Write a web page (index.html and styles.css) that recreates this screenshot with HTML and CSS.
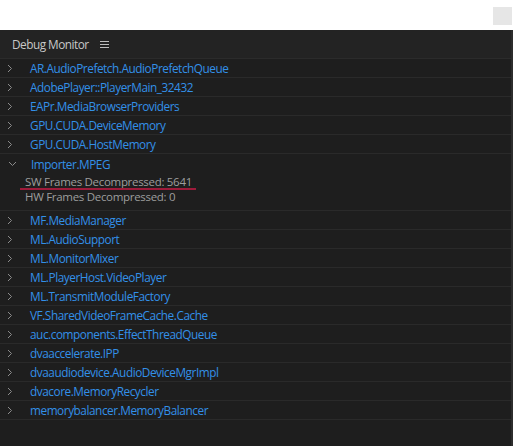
FILE: index.html
```html
<!DOCTYPE html>
<html>
<head>
<meta charset="utf-8">
<link rel="stylesheet" href="styles.css">
</head>
<body>
<div class="topbar"><div class="winbtn"></div></div>
<div class="panel">
  <div class="header">
    <span class="title">Debug Monitor</span>
    <svg class="menu" width="9" height="8" viewBox="0 0 9 8"><path d="M0 1.5H9M0 4.5H9M0 7.5H9" stroke="#bdbdbd" stroke-width="1"/></svg>
  </div>
  <div class="list">
    <div class="row"><svg class="chev" width="6" height="9" viewBox="0 0 6 9"><path d="M1 1L4.5 4.5L1 8" fill="none" stroke="#8c8c8c" stroke-width="1"/></svg><span class="name">AR.AudioPrefetch.AudioPrefetchQueue</span></div>
    <div class="row"><svg class="chev" width="6" height="9" viewBox="0 0 6 9"><path d="M1 1L4.5 4.5L1 8" fill="none" stroke="#8c8c8c" stroke-width="1"/></svg><span class="name">AdobePlayer::PlayerMain_32432</span></div>
    <div class="row"><svg class="chev" width="6" height="9" viewBox="0 0 6 9"><path d="M1 1L4.5 4.5L1 8" fill="none" stroke="#8c8c8c" stroke-width="1"/></svg><span class="name">EAPr.MediaBrowserProviders</span></div>
    <div class="row"><svg class="chev" width="6" height="9" viewBox="0 0 6 9"><path d="M1 1L4.5 4.5L1 8" fill="none" stroke="#8c8c8c" stroke-width="1"/></svg><span class="name">GPU.CUDA.DeviceMemory</span></div>
    <div class="row"><svg class="chev" width="6" height="9" viewBox="0 0 6 9"><path d="M1 1L4.5 4.5L1 8" fill="none" stroke="#8c8c8c" stroke-width="1"/></svg><span class="name">GPU.CUDA.HostMemory</span></div>
    <div class="group">
      <div class="row open"><svg class="chev down" width="9" height="6" viewBox="0 0 9 6"><path d="M1 1L4.5 4.5L8 1" fill="none" stroke="#8c8c8c" stroke-width="1"/></svg><span class="name">Importer.MPEG</span></div>
      <div class="child marked">SW Frames Decompressed: 5641</div>
      <div class="child">HW Frames Decompressed: 0</div>
    </div>
    <div class="row"><svg class="chev" width="6" height="9" viewBox="0 0 6 9"><path d="M1 1L4.5 4.5L1 8" fill="none" stroke="#8c8c8c" stroke-width="1"/></svg><span class="name">MF.MediaManager</span></div>
    <div class="row"><svg class="chev" width="6" height="9" viewBox="0 0 6 9"><path d="M1 1L4.5 4.5L1 8" fill="none" stroke="#8c8c8c" stroke-width="1"/></svg><span class="name">ML.AudioSupport</span></div>
    <div class="row"><svg class="chev" width="6" height="9" viewBox="0 0 6 9"><path d="M1 1L4.5 4.5L1 8" fill="none" stroke="#8c8c8c" stroke-width="1"/></svg><span class="name">ML.MonitorMixer</span></div>
    <div class="row"><svg class="chev" width="6" height="9" viewBox="0 0 6 9"><path d="M1 1L4.5 4.5L1 8" fill="none" stroke="#8c8c8c" stroke-width="1"/></svg><span class="name">ML.PlayerHost.VideoPlayer</span></div>
    <div class="row"><svg class="chev" width="6" height="9" viewBox="0 0 6 9"><path d="M1 1L4.5 4.5L1 8" fill="none" stroke="#8c8c8c" stroke-width="1"/></svg><span class="name">ML.TransmitModuleFactory</span></div>
    <div class="row"><svg class="chev" width="6" height="9" viewBox="0 0 6 9"><path d="M1 1L4.5 4.5L1 8" fill="none" stroke="#8c8c8c" stroke-width="1"/></svg><span class="name">VF.SharedVideoFrameCache.Cache</span></div>
    <div class="row"><svg class="chev" width="6" height="9" viewBox="0 0 6 9"><path d="M1 1L4.5 4.5L1 8" fill="none" stroke="#8c8c8c" stroke-width="1"/></svg><span class="name">auc.components.EffectThreadQueue</span></div>
    <div class="row"><svg class="chev" width="6" height="9" viewBox="0 0 6 9"><path d="M1 1L4.5 4.5L1 8" fill="none" stroke="#8c8c8c" stroke-width="1"/></svg><span class="name">dvaaccelerate.IPP</span></div>
    <div class="row"><svg class="chev" width="6" height="9" viewBox="0 0 6 9"><path d="M1 1L4.5 4.5L1 8" fill="none" stroke="#8c8c8c" stroke-width="1"/></svg><span class="name">dvaaudiodevice.AudioDeviceMgrImpl</span></div>
    <div class="row"><svg class="chev" width="6" height="9" viewBox="0 0 6 9"><path d="M1 1L4.5 4.5L1 8" fill="none" stroke="#8c8c8c" stroke-width="1"/></svg><span class="name">dvacore.MemoryRecycler</span></div>
    <div class="row"><svg class="chev" width="6" height="9" viewBox="0 0 6 9"><path d="M1 1L4.5 4.5L1 8" fill="none" stroke="#8c8c8c" stroke-width="1"/></svg><span class="name">memorybalancer.MemoryBalancer</span></div>
  </div>
</div>
</body>
</html>
```
FILE: styles.css
```css
html, body {
  margin: 0;
  padding: 0;
  background: #ffffff;
  font-family: "Open Sans", "DejaVu Sans", sans-serif;
}
.topbar {
  height: 30px;
  display: flex;
  justify-content: flex-end;
  align-items: flex-start;
}
.winbtn {
  width: 19px;
  height: 18px;
  margin-top: 7px;
  margin-right: 1px;
  background: #e6e6e6;
}
.panel {
  height: 416px;
  background: #1e1e1e;
  border-right: 2px solid #2c2c2c;
  box-sizing: border-box;
}
.header {
  height: 29px;
  background: #232323;
  display: flex;
  align-items: center;
  padding-left: 12px;
  box-sizing: border-box;
  border-bottom: 1px solid #2b2b2b;
}
.title {
  color: #c8c8c8;
  font-size: 11.8px;
  letter-spacing: -0.5px;
}
.menu {
  margin-left: 11px;
}
.list {
  display: flex;
  flex-direction: column;
}
.row {
  height: 19px;
  display: flex;
  align-items: center;
  border-bottom: 1px solid #2a2a2a;
  box-sizing: border-box;
  padding-left: 7px;
}
.group {
  border-bottom: 1px solid #2a2a2a;
  padding-bottom: 6px;
}
.group .row {
  border-bottom: none;
}
.chev {
  flex: none;
}
.chev.down {
  margin-left: 1px;
}
.name {
  color: #3390e8;
  font-size: 11.8px;
  letter-spacing: -0.45px;
  margin-left: 17px;
}
.row.open .name {
  margin-left: 14px;
}
.child {
  color: #9d9d9d;
  font-size: 11.5px;
  letter-spacing: -0.3px;
  padding-left: 25px;
  height: 15px;
  line-height: 15px;
  position: relative;
}
.child.marked {
  margin-top: 1px;
}
.child.marked::after {
  content: "";
  position: absolute;
  left: 20px;
  top: 14px;
  width: 176px;
  height: 2px;
  background: #9e1b3b;
}
```
